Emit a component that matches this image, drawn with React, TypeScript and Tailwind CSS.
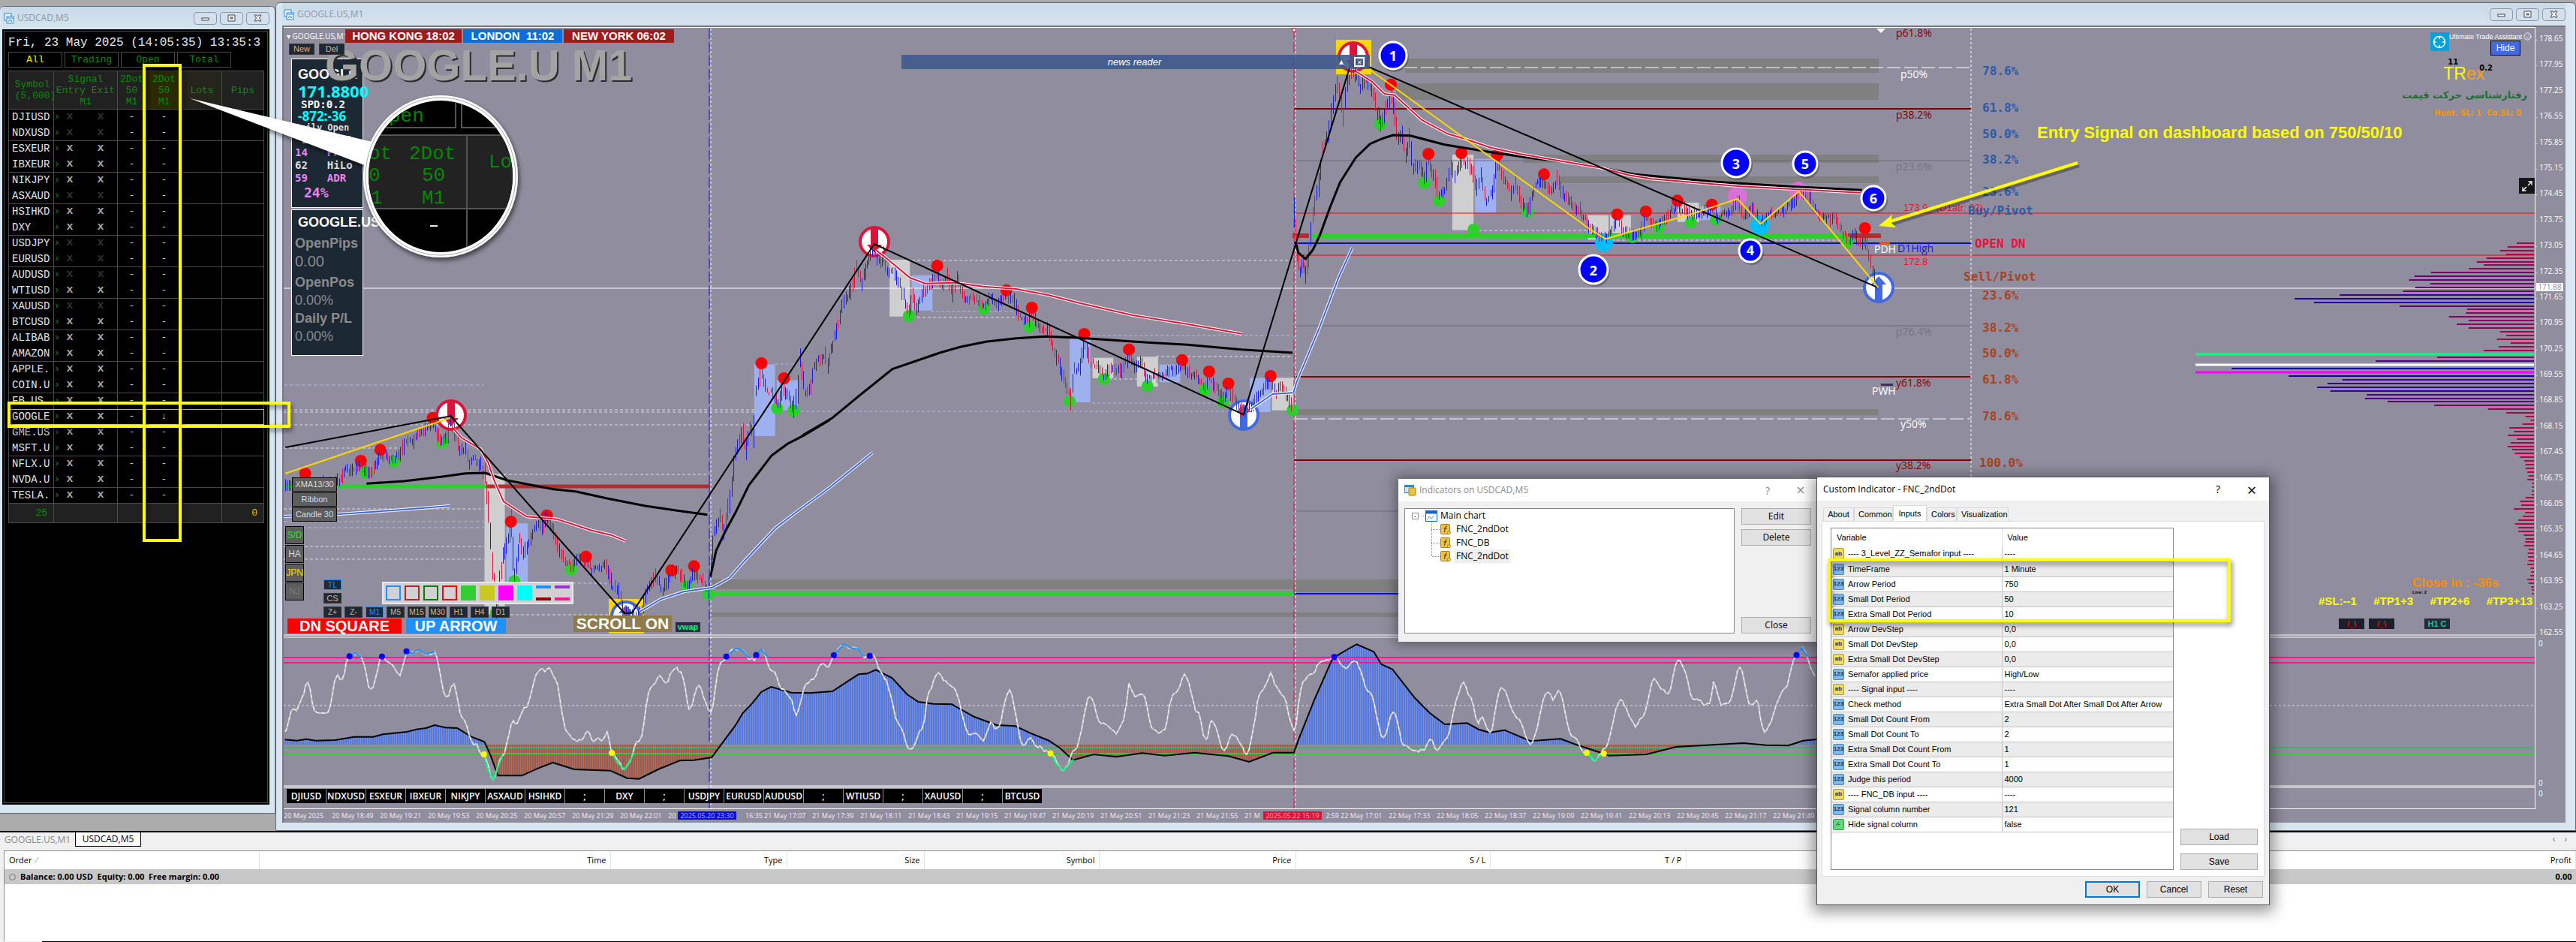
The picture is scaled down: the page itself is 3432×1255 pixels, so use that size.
import React from "react";
import { Maximize2, Crosshair, Smile } from "lucide-react";

type Pt = [number, number];

const parse = (s: string): Pt[] =>
  s.trim().split(/\s+/).map((p) => p.split(",").map(Number) as Pt);

/* Each stretch of the series is stored on its own sample grid: origin plus samples per unit. */
const grid = (ox: number, oy: number, sx: number) => (s: string): Pt[] =>
  parse(s).map(([x, y]) => [Math.round((ox + x / sx) * 10) / 10, Math.round((oy + y / 3) * 10) / 10]);

const gA = grid(370, 540, 1.96);
const gB = grid(1000, 240, 2.063);
const gC = grid(1680, 20, 2.613);
const gD = grid(2200, 20, 2.529);
const gE = grid(2800, 20, 2.481);
const gF = grid(2540, 420, 1.758);
const gG = grid(0, 840, 1.568);
const gH = grid(900, 840, 1.005);

const str = (p: Pt[]) => p.map((q) => q.join(",")).join(" ");

const makeRandom = (start: number) => {
  let seed = start;
  return () => {
    seed = (seed * 16807) % 2147483647;
    return seed / 2147483647;
  };
};

const price: Pt[][] = [
  [
    ...gA(
      "20,330 60,300 100,310 160,305 172,260 190,265 212,240 230,268 250,255 268,195 300,215 320,200 335,135 350,155 370,110 385,105 402,70 428,145 445,110 450,50 475,180 490,170 500,230 510,200 530,240 541,280 549,400 560,640 570,820 588,600 610,480 618,690 632,540 640,590 655,545 680,470 690,500 703,450 720,510 745,610 765,640 785,610 804,620 820,660 858,640 875,720 890,740 905,820 925,830 950,820 965,740 985,680 1005,740 1028,670 1045,665 1070,720 1087,670 1105,700 1125,730 1140,500 1155,440 1165,500 1180,380 1195,190 1215,110 1222,180 1232,90 1243,130"
    ),
    ...gB(
      "8,1000 15,850 30,770 45,850 60,850 75,900 90,830 105,870 118,910 130,830 136,720 150,850 165,820 175,750 190,710 205,700 212,740 235,600 250,510 262,470 275,450 290,350 306,410 320,330 338,265 352,330 365,300 375,360 395,370 410,420 435,530 445,470 455,510 475,450 500,400 512,370 525,430 540,390 555,450 567,390 590,480 610,470 640,500 660,470 680,490 703,455 725,480 740,550 765,560 772,530 795,590 815,590 830,660 850,740 865,820 878,870 890,760 905,740 918,650 935,730 950,740 970,780 1000,750 1015,770 1040,700 1055,750 1070,720 1090,800 1110,780 1130,790 1150,760 1185,745 1200,770 1225,780 1248,830 1260,780 1280,830 1298,880 1313,830 1330,880 1355,930 1375,900 1400,850 1429,800 1445,850 1460,820 1490,900"
    ),
  ],
  [
    ...gC(
      "115,800 125,950 135,1020 145,980 155,1030 165,960 180,800 200,680 215,540 235,470 250,350 265,270 285,400 300,280 320,210 345,290 365,260 385,290 405,390 415,430 440,360 455,310 465,400 478,500 490,470 505,560 515,500 530,620 550,590 568,660 583,590 605,660 620,730 645,680 660,600 675,640 698,580 725,600 750,690 765,640 785,740 805,700 822,590 850,660 870,710 885,670 905,740 930,780 955,680 985,660 1010,710 1030,660 1050,720 1085,760 1110,780 1145,850 1190,890 1215,880 1240,810 1260,860 1290,880 1325,860 1340,800 1365,830 1385,840"
    ),
    ...gD(
      "50,810 88,760 110,780 133,800 204,780 218,810 240,800 270,780 290,740 310,800 345,780 368,830 400,800 440,790 475,750 500,710 530,720 550,780 590,820 615,800 640,860 664,900 685,880 710,920 720,890 730,960 745,1020 755,1070 765,1090"
    ),
  ],
];

const bars = price.flatMap((line) => {
  const out: { x: number; y1: number; y2: number; up: boolean }[] = [];
  const rnd = makeRandom(7);
  for (let i = 0; i < line.length - 1; i++) {
    const [xa, ya] = line[i];
    const [xb, yb] = line[i + 1];
    const n = Math.max(1, Math.round((xb - xa) / 2.4));
    for (let k = 0; k < n; k++) {
      const y = ya + ((yb - ya) * k) / n + (rnd() - 0.5) * 7;
      const step = Math.abs(yb - ya) / n;
      const h = 2 + rnd() * 6 + Math.min(step, 30) * 0.5;
      out.push({
        x: Math.round(xa + ((xb - xa) * k) / n) + 0.5,
        y1: y - h,
        y2: y + h,
        up: rnd() < (yb < ya ? 0.78 : 0.3),
      });
    }
  }
  return out;
});

const redDots = [
  ...gA("72,273 217,222 268,178 405,50 609,465 703,440 805,605 1028,660 1087,643"),
  ...gB("30,732 92,792 513,342 703,440 773,510 917,615 1040,677 1186,719 1260,765 1313,813 1429,783"),
  ...gC("452,278 583,555 698,552 822,560 985,637 1240,797 1340,785 1450,742"),
  ...gD("204,758 720,852"),
];
const greenDots = [
  ...gA("230,270 303,225 429,150 618,703 766,657 1070,722 1125,755 570,830"),
  ...gB("73,912 118,921 435,543 641,515 766,586 877,884 971,795 1091,823 1248,840 1298,888 1490,920"),
  ...gC("415,437 568,672 620,742 740,858 928,787 1293,888 1385,848 1497,829"),
  ...gD("218,818 660,908"),
];

const greyZones = [
  gA("540,275 593,835"),
  gB("382,318 438,545"),
  gB("940,710 997,792"),
  gB("1062,706 1120,825"),
  gB("1433,790 1493,920"),
  gC("666,558 740,860"),
  gC("1138,800 1210,898"),
  gC("1215,800 1288,872"),
  gC("1450,750 1525,827"),
];
const blueZones = [
  gA("597,472 653,708"),
  gB("10,736 67,1023"),
  gB("443,380 500,521"),
  gB("72,800 130,920"),
  gB("877,625 934,888"),
  gB("1124,737 1181,808"),
  gB("1372,790 1429,927"),
  gC("745,575 818,790"),
  gC("1528,765 1600,820"),
];

const slow = [
  gA("232,313 330,303 430,285 490,272 541,270 600,300 650,315 720,335 780,345 860,372 960,402 1050,422 1122,437"),
  [
    ...gA("1130,685 1145,580 1170,500 1195,430 1230,320 1290,200 1330,155 1380,115 1440,60"),
    ...gB("145,1018 225,950 300,860 390,755 460,720 520,690 580,665 650,645 730,632 810,625 900,630 1050,645 1200,658 1350,677 1490,690"),
  ],
  [
    ...gC("120,905 130,950 155,975 180,940 205,880 240,770 275,670 330,570 380,515 420,495 460,480 520,482 640,518 800,548 950,573 1100,592 1300,637"),
    ...gD("0,643 200,665 460,685 710,700"),
  ],
];
const fast = [
  gA("460,95 480,130 530,175 550,230 565,300 590,385 650,445 730,455 820,500 870,518 908,542"),
  gB("345,280 380,320 438,390 480,413 560,410 640,425 730,435 820,460 900,490 1050,540 1200,575 1350,614"),
  [
    ...gC("330,225 385,265 430,315 465,320 560,420 650,475 710,495 800,530 900,555 1050,585 1180,610 1280,640"),
    ...gD("0,655 300,685 705,710"),
  ],
];
const base = [
  gA("0,445 160,435 300,420 450,402"),
  gA("945,825 1000,775 1060,745 1135,728 1180,690 1220,620 1300,490 1360,420 1440,330 1553,190"),
  gB("1375,915 1435,855 1492,850"),
  [...gB("1492,850 1500,810"), ...gC("200,1260 270,1050 318,930")],
];

const oscKnots = [
  ...gG(
    "595,410 612,310 620,320 630,270 643,205 657,320 670,335 685,325 705,180 715,200 727,105 742,90 755,110 775,240 798,105 815,125 835,180 850,85 862,90 875,75 890,95 908,85 932,270 948,215 965,350 990,450 1010,495 1030,595 1050,500 1072,365 1080,370 1095,310 1130,150 1138,162 1147,145 1160,200 1185,410 1205,440 1215,435 1228,405 1240,445 1250,430 1258,445 1268,400 1278,490 1305,555 1335,440 1360,230 1378,180 1390,210 1410,150 1422,165 1440,310 1460,220"
  ),
  ...gH(
    "47,330 60,130 80,72 90,80 97,110 105,118 115,75 130,160 145,240 152,260 162,340 175,210 185,190 195,130 205,145 212,100 225,55 235,70 245,75 252,108 262,95 280,190 300,380 315,480 330,400 340,240 352,170 362,205 370,220 395,420 402,405 412,440 422,370 430,395 447,240 465,460 475,430 485,465 502,490 520,560 535,480 555,260 570,370 590,410 600,360 607,215 615,260 625,250 640,400 650,410 655,390 665,260 673,240 681,170 700,330 710,440 718,360 735,480 745,410 765,490 785,240 797,175 805,230 815,270 828,400 840,200 850,180 865,120 883,105 898,155 905,130 912,130 930,250 948,430 961,320 975,460 992,485 1003,475 1010,430 1020,480 1030,440 1055,205 1065,270 1075,370 1080,345 1090,410 1105,225 1130,360 1145,455 1168,240 1175,280 1182,235 1200,420 1220,490 1231,520 1245,470 1265,275 1285,380 1295,340 1310,190 1320,235 1330,250 1342,115 1350,150 1362,270 1370,275 1378,300 1385,290 1390,200 1400,295 1410,290 1425,150 1440,300 1447,280 1458,405 1485,235 1500,100 1508,70 1528,190"
  ),
];
const osc: Pt[] = (() => {
  const rnd = makeRandom(11);
  const out: Pt[] = [];
  for (let i = 0; i < oscKnots.length - 1; i++) {
    const [xa, ya] = oscKnots[i];
    const [xb, yb] = oscKnots[i + 1];
    const n = Math.max(1, Math.round((xb - xa) / 3));
    for (let k = 0; k < n; k++) {
      const t = k / n;
      const s = t * t * (3 - 2 * t);
      out.push([Math.round(xa + (xb - xa) * t), Math.round(ya + (yb - ya) * s + (rnd() - 0.5) * 4)]);
    }
  }
  return out;
})();

const hist = [
  ...gG(
    "595,436 620,440 640,434 660,440 700,438 740,425 780,425 800,415 850,405 870,395 890,390 908,378 930,388 955,390 985,425 1012,445 1025,500 1040,580 1090,580 1125,550 1155,528 1200,555 1275,560 1310,590 1335,593 1375,555 1420,520 1450,518 1487,507"
  ),
  ...gH(
    "60,460 80,380 90,330 103,290 115,245 128,225 155,248 180,250 210,243 245,175 257,172 268,157 290,190 310,255 325,285 345,293 370,295 400,345 430,378 455,382 475,410 500,440 515,470 532,518 560,495 590,505 625,490 655,500 695,488 740,502 768,525 800,488 828,488 835,430 855,280 880,110 900,75 912,55 935,85 945,135 960,155 990,270 1010,330 1030,375 1060,370 1075,395 1090,408 1110,398 1145,442 1185,433 1205,455 1225,475 1250,500 1300,495 1340,465 1430,450 1460,458 1490,460 1510,440 1528,435"
  ),
];
const ZERO = 992;
const histArea = `378,${ZERO} ${str(hist)} 2420,${ZERO}`;

const profile = [
  ...gE(
    "1372,912 1342,927 1317,942 1337,957 1272,971 1240,986 1263,998 1214,1014 1089,1028 1034,1044 1016,1058 1086,1073 1036,1088 996,1103 787,1119 638,1134 702,1149 985,1163 1208,1175 1204,1191 1148,1206 1213,1220 1174,1236 1213,1251"
  ),
  ...gF(
    "1390,65 1405,80 1383,96 1415,111 1387,126 1352,141 1243,168 1099,183 762,212 895,242 1021,258 986,272 962,288 993,303 1078,318 1074,333 1127,345 1236,360 1362,375 1405,390 1450,405 1462,420 1443,435 1412,450 1423,465 1409,480 1430,495 1415,510 1408,525 1418,537 1425,552 1437,567 1447,582 1450,597 1450,612 1454,627 1457,642 1454,657 1465,672 1465,687 1465,702 1464,717 1450,729 1437,744 1440,759 1423,774 1449,789 1443,804 1433,819 1425,834 1433,849 1433,864 1446,879 1450,894 1449,906 1447,921 1457,936 1455,951 1456,966 1457,981 1454,996 1462,1011 1463,1026 1461,1041 1454,1056 1457,1071 1463,1086 1465,1099 1465,1113"
  ),
];
const heat = (x: number) => {
  const t = Math.min(1, (3376 - x) / 370);
  return `rgb(${Math.round(195 * (1 - t))},0,${Math.round(60 + 125 * t)})`;
};

function Sign({ x, y, up = false, box = false }: { x: number; y: number; up?: boolean; box?: boolean }) {
  const c = up ? "#4169e1" : "#dc143c";
  return (
    <g transform={`translate(${x} ${y})`}>
      {box && <rect x="-23" y="-23" width="47" height="46" fill="#ffd700" />}
      <circle r="19" fill="#fff" stroke={c} strokeWidth="4" />
      <path d="M-5,-17 H5 V4 H10 L0,15 L-10,4 H-5 Z" fill={c} transform={up ? "rotate(180)" : undefined} />
    </g>
  );
}

function Step({ x, y, r, n }: { x: number; y: number; r: number; n: number }) {
  return (
    <g>
      <circle cx={x + 2} cy={y + 3} r={r} fill="#000" opacity="0.25" />
      <circle cx={x} cy={y} r={r - 1} fill="#0000ff" stroke="#fff" strokeWidth="3" />
      <text x={x} y={y + r / 3 + 1} textAnchor="middle" fill="#fff" className="font-['Noto_Sans'] text-[18px] font-bold">
        {n}
      </text>
    </g>
  );
}

const MONO = "font-['DejaVu_Sans_Mono'] text-[16px] font-bold";
const LBL = "font-['Open_Sans'] text-[14px]";

function Chart() {
  const blue = "#2d5aa8";
  const rust = "#a8431f";
  const h = (y: number, x1: number, x2: number, color: string, w = 1, dash?: string) => (
    <line key={`${y}-${x1}-${color}`} x1={x1} x2={x2} y1={y} y2={y} stroke={color} strokeWidth={w} strokeDasharray={dash} />
  );
  return (
    <svg className="block h-[1040px] w-full" role="img" aria-label="GOOGLE.US one minute chart">
      <defs>
        <pattern id="sBlue" width="3" height="6" patternUnits="userSpaceOnUse">
          <rect width="3" height="6" fill="#4f78ea" />
          <rect width="1" height="6" fill="#8a8fb4" />
        </pattern>
        <pattern id="sRust" width="3" height="6" patternUnits="userSpaceOnUse">
          <rect width="3" height="6" fill="#a9593f" />
          <rect width="1" height="6" fill="#8f7a83" />
        </pattern>
        <clipPath id="above"><rect x="378" y="849" width="2100" height={ZERO - 849} /></clipPath>
        <clipPath id="below"><rect x="378" y={ZERO} width="2100" height="60" /></clipPath>
        <clipPath id="area"><polygon points={histArea} /></clipPath>
      </defs>
      <g transform="translate(-378 -37)">
        <rect x="1872" y="78" width="631" height="19" fill="#808080" />
        <rect x="1860" y="111" width="643" height="22" fill="#808080" />
        <rect x="2030" y="206" width="473" height="11" fill="#808080" />
        <rect x="2078" y="235" width="425" height="9" fill="#808080" />
        <rect x="1724" y="545" width="779" height="8" fill="#808080" />
        <rect x="947" y="772" width="1556" height="13" fill="#808080" />
        <rect x="947" y="816" width="1556" height="6" fill="#808080" />
        <rect x="1724" y="772" width="779" height="17" fill="#808080" />
        {[513, 695, 703].map((y) => h(y, 378, 645, "#a9b6ee", 1, "5 3"))}
        {[546, 549, 566].map((y) => h(y, 378, 1005, "#dcdce6", 1, "4 3"))}
        {[597].map((y) => h(y, 378, 530, "#dcdce6", 1, "4 3"))}
        {[678, 728, 745].map((y) => h(y, 378, 645, "#dcdce6", 1, "4 3"))}
        {h(632, 650, 945, "#dcdce6", 1, "4 3")}
        {h(777, 700, 810, "#c3caf0", 1, "4 3")}
        {h(819, 680, 850, "#dcdce6", 1, "4 3")}
        {h(347, 1215, 1722, "#dcdce6", 1, "4 3")}
        {h(415, 1240, 1350, "#a9b6ee", 1, "4 3")}
        {h(423, 1215, 1355, "#dcdce6", 1, "4 3")}
        {h(447, 1455, 1722, "#a9b6ee", 1, "4 3")}
        {h(475, 1540, 1722, "#dcdce6", 1, "4 3")}
        {h(485, 1033, 1060, "#a9b6ee", 1, "4 3")}
        {h(505, 1470, 1540, "#dcdce6", 1, "4 3")}
        {h(537, 1455, 1640, "#a9b6ee", 1, "4 3")}
        {h(548, 1060, 1640, "#a9b6ee", 1, "4 3")}
        {h(307, 1970, 2120, "#dcdce6", 1, "4 3")}
        {h(320, 2140, 2460, "#dcdce6", 1, "4 3")}

        {greyZones.map(([a, b], i) => (
          <rect key={i} x={a[0]} y={a[1]} width={b[0] - a[0]} height={b[1] - a[1]} fill="#d0cfd0" />
        ))}
        {blueZones.map(([a, b], i) => (
          <rect key={i} x={a[0]} y={a[1]} width={b[0] - a[0]} height={b[1] - a[1]} fill="#9fb0ee" />
        ))}

        {h(145, 1724, 2626, "#800000", 2)}
        {h(214, 1724, 2626, "#6b6879")}
        {h(434, 1724, 2626, "#6b6879")}
        {h(681, 1724, 2626, "#6b6879")}
        {h(502, 1724, 2626, "#8b0000", 2)}
        {h(613, 1724, 2626, "#8b0000", 2)}
        {h(90, 1870, 2626, "#fff", 1, "18 5")}
        {h(558, 1724, 2626, "#fff", 1, "18 5")}
        {h(384, 378, 3377, "#fff", 1)}
        {h(284, 1724, 3377, "#ff0000", 1)}
        {h(340, 1724, 3377, "#ff0000", 1)}
        {h(324, 1724, 2626, "#0000ff", 2)}
        {h(791, 1724, 2626, "#0000ff", 2)}
        {h(648, 378, 648, "#28d228", 5)}
        {h(648, 648, 946, "#b03030", 5)}
        {h(791, 947, 1724, "#28d228", 5)}
        {h(314, 1745, 2462, "#28d228", 6)}
        {h(314, 1722, 1744, "#b03030", 6)}
        {h(314, 2462, 2506, "#b03030", 6)}
        {h(324, 2504, 2518, "#ff4500", 3)}
        <line x1="945" x2="945" y1="38" y2="1077" stroke="#1414d2" strokeDasharray="14 4" />
        <line x1="947" x2="947" y1="38" y2="1077" stroke="#fff" strokeDasharray="3 3" />
        <line x1="1724" x2="1724" y1="38" y2="1077" stroke="#dc143c" strokeDasharray="14 4" />
        <line x1="1726" x2="1726" y1="38" y2="1077" stroke="#fff" strokeDasharray="3 3" />
        <rect x="1722" y="38" width="4" height="4" fill="#fff" stroke="#dc143c" />
        <line x1="2626" x2="2626" y1="38" y2="846" stroke="#fff" strokeDasharray="3 3" />

        {greenDots.map(([x, y], i) => <circle key={i} cx={x} cy={y} r="8" fill="#28d228" />)}
        {redDots.map(([x, y], i) => <circle key={i} cx={x} cy={y} r="8" fill="#ff0000" />)}
        <circle cx="2137" cy="323" r="12" fill="#00bfff" />
        <circle cx="2345" cy="300" r="13" fill="#00bfff" />
        <circle cx="2315" cy="262" r="13" fill="#da70d6" />
        <circle cx="2396" cy="254" r="12" fill="#da70d6" />

        <Sign x={601} y={553} />
        <Sign x={1165} y={322} />
        <Sign x={1803} y={76} box />
        <Sign x={834} y={821} up box />
        <Sign x={1657} y={553} up />
        <Sign x={2503} y={383} up />

        {bars.map((b, i) => (
          <line key={i} x1={b.x} x2={b.x} y1={b.y1} y2={b.y2} stroke={b.up ? "#1a1ae6" : "#dc143c"} />
        ))}
        {slow.map((p, i) => <polyline key={i} points={str(p)} fill="none" stroke="#000" strokeWidth="3" strokeLinejoin="round" />)}
        {fast.map((p, i) => (
          <g key={i} fill="none">
            <polyline points={str(p)} stroke="#fff" strokeWidth="4" />
            <polyline points={str(p)} stroke="#dc143c" strokeWidth="2" />
          </g>
        ))}
        {base.map((p, i) => (
          <g key={i} fill="none">
            <polyline points={str(p)} stroke="#fff" strokeWidth="4" />
            <polyline points={str(p)} stroke="#3f63dc" strokeWidth="2" />
          </g>
        ))}
        <g fill="none" strokeWidth="2">
          <polyline points={str([...gA("20,168 452,43 905,830 925,830"), ...gB("340,255 1355,937"), ...gC("310,205 340,190"), ...gD("765,1090")])} stroke="#000" />
          <polyline points={str(gA("20,272 450,50"))} stroke="#ffd700" />
          <polyline points={str([...gC("375,215 1150,860 1200,895 1500,795"), ...gD("290,735 368,835 497,705 765,1090")])} stroke="#ffd700" />
        </g>

        {profile.map(([x, y], i) => h(Math.round(y), x, 3376, heat(x), 2))}
        {h(472, 2925, 3376, "#00ff7f", 3)}
        {h(486, 2925, 3376, "#fff", 3)}
        {h(496, 2925, 3376, "#ff00ff", 3)}

        <g className={LBL}>
          <text x="2526" y="49" fill="#800000">p61.8%</text>
          <text x="2532" y="104" fill="#fff">p50%</text>
          <text x="2526" y="158" fill="#800000">p38.2%</text>
          <text x="2526" y="227" fill="#77747f">p23.6%</text>
          <text x="2526" y="447" fill="#77747f">p76.4%</text>
          <text x="2526" y="515" fill="#8b0000">y61.8%</text>
          <text x="2532" y="570" fill="#fff">y50%</text>
          <text x="2526" y="625" fill="#8b0000">y38.2%</text>
          <text x="2497" y="337" fill="#fff">PDH</text>
          <text x="2494" y="526" fill="#fff">PWH</text>
          <text x="2528" y="336" fill="#1414e6">D1High</text>
        </g>
        <rect x="2506" y="511" width="16" height="3" fill="#3b2f5c" />
        <g className="font-['Liberation_Sans'] text-[13px]" fill="#f01028">
          <text x="2536" y="281">173.9</text>
          <text x="2580" y="281">(D1atr: 62)</text>
          <text x="2536" y="353">172.8</text>
        </g>
        <g className={MONO}>
          {([[100, "78.6%"], [149, "61.8%"], [184, "50.0%"], [218, "38.2%"], [261, "23.6%"]] as [number, string][]).map(([y, t]) => (
            <text key={y} x="2641" y={y} fill={blue}>{t}</text>
          ))}
          <text x="2622" y="286" fill={blue}>Buy/Pivot</text>
          <text x="2631" y="330" fill="#e8103c">OPEN DN</text>
          <text x="2616" y="374" fill={rust}>Sell/Pivot</text>
          {([[399, "23.6%"], [442, "38.2%"], [476, "50.0%"], [511, "61.8%"], [560, "78.6%"]] as [number, string][]).map(([y, t]) => (
            <text key={y} x="2641" y={y} fill={rust}>{t}</text>
          ))}
          <text x="2637" y="622" fill={rust}>100.0%</text>
        </g>
        <path d="M2500,38 h12 l-6,6 Z" fill="#fff" />

        <text x="2714" y="184" fill="#ffff00" className="font-['Liberation_Sans'] text-[22px] font-bold">
          Entry Signal on dashboard based on 750/50/10
        </text>
        <g opacity="0.3" transform="translate(2 4)">
          <path d="M2768,217 L2515,296" stroke="#000" strokeWidth="4" />
        </g>
        <path d="M2768,217 L2515,296" stroke="#ffff00" strokeWidth="4" />
        <path d="M2503,301 L2521,286 L2519,296 L2526,303 Z" fill="#ffff00" />
        <Step x={1856} y={74} r={19} n={1} />
        <Step x={2123} y={359} r={20} n={2} />
        <Step x={2313} y={217} r={20} n={3} />
        <Step x={2332} y={334} r={16} n={4} />
        <Step x={2405} y={218} r={17} n={5} />
        <Step x={2496} y={264} r={17} n={6} />

        {h(846, 378, 3377, "#fff")}
        {h(849, 378, 3377, "#fff")}
        {h(1047, 378, 3377, "#fff")}
        {h(1049, 378, 3377, "#fff")}
        {h(940, 378, 3377, "#dcdce6", 1, "3 3")}
        <g clipPath="url(#area)">
          <rect x="378" y="849" width="2050" height="150" clipPath="url(#above)" fill="url(#sBlue)" />
          <rect x="378" y={ZERO} width="2050" height="60" clipPath="url(#below)" fill="url(#sRust)" />
        </g>
        {h(876, 378, 3377, "#ff1493", 2)}
        {h(883, 378, 3377, "#ff1493", 2)}
        {h(996, 378, 3377, "#3cb371", 2)}
        {h(1004, 378, 3377, "#32cd32", 2)}
        <polyline points={str(hist)} fill="none" stroke="#000" strokeWidth="2" />
        <polyline points={str(osc)} fill="none" stroke="#c4c4c8" strokeWidth="2" />
        <polyline points={str(osc)} fill="none" stroke="#fff" strokeWidth="1" strokeDasharray="5 3" />
        <g fill="none" stroke="#1e90ff" strokeWidth="2">
          <polyline points={str(gG("727,105 742,90 755,108"))} />
          <polyline points={str(gG("848,90 862,90 875,75 890,95 908,85"))} />
          <polyline points={str(gH("68,105 80,72 90,80 97,108"))} />
          <polyline points={str(gH("108,100 115,75 124,108"))} />
          <polyline points={str(gH("212,100 225,55 235,70 245,75 252,105"))} />
          <polyline points={str(gH("1500,100 1508,70 1516,106"))} />
        </g>
        <g fill="none" stroke="#00fa7a" strokeWidth="2">
          <polyline points={str(gG("1010,495 1020,560 1030,595 1050,500"))} />
          <polyline points={str(gG("1278,490 1290,530 1305,555 1325,490"))} />
          <polyline points={str(gH("502,490 510,535 520,560 533,515"))} />
          <polyline points={str(gH("1220,490 1231,520 1243,490"))} />
        </g>
        {[...gG("730,103 798,104 849,83"), ...gH("68,104 108,98 212,99 260,101 882,106 1501,98")].map(([x, y], i) => (
          <circle key={i} cx={x} cy={y} r="4" fill="#0000ff" />
        ))}
        {[...gG("1011,495 1278,489"), ...gH("502,491 1220,489 1243,492")].map(([x, y], i) => (
          <circle key={i} cx={x} cy={y} r="4" fill="#ffff00" />
        ))}
      </g>
    </svg>
  );
}

const symbols = "DJIUSD NDXUSD ESXEUR IBXEUR NIKJPY ASXAUD HSIHKD DXY USDJPY EURUSD AUDUSD WTIUSD XAUUSD BTCUSD ALIBAB AMAZON APPLE. COIN.U FB.US GOOGLE GME.US MSFT.U NFLX.U NVDA.U TESLA.".split(" ");
const dimmed = new Set(["DJIUSD", "NDXUSD", "ASXAUD", "USDJPY", "EURUSD", "AUDUSD", "XAUUSD"]);

function WindowButtons() {
  return (
    <div className="flex gap-1">
      {["Minimize", "Restore", "Close"].map((n) => (
        <button key={n} aria-label={n} className="flex h-[17px] w-[31px] items-center justify-center rounded-sm border border-[#8a97ab] bg-[#d3e0ec]">
          <svg width="11" height="10" viewBox="0 0 11 10" fill="#fff" stroke="#3f4452">
            {n === "Minimize" && <rect x="1" y="5" width="9" height="3" />}
            {n === "Restore" && <path d="M1,1 H10 V9 H1 Z M4,4 H7 V6 H4 Z" fillRule="evenodd" />}
            {n === "Close" && <path d="M1,1 H4 L5.5,3 L7,1 H10 L7.5,5 L10,9 H7 L5.5,7 L4,9 H1 L3.5,5 Z" />}
          </svg>
        </button>
      ))}
    </div>
  );
}

function TitleBar({ title }: { title: string }) {
  return (
    <header className="flex h-[30px] items-center gap-1 bg-gradient-to-b from-[#c9dae8] to-[#d6e3ef] pr-0 pl-[2px]">
      <svg width="14" height="15" viewBox="0 0 14 15" fill="#eaf6ff" stroke="#2e8fd0">
        <rect x="1" y="1" width="9" height="9" />
        <rect x="4" y="5" width="9" height="9" />
        <path d="M4,7 H13 M6,12 L8,9 L10,12 L11,10" />
      </svg>
      <h2 className="flex-1 font-['Open_Sans'] text-[12px] text-[#8b98a6]">{title}</h2>
      <WindowButtons />
    </header>
  );
}

function Dashboard() {
  const cell = "border border-[#4a4a4a] p-0";
  const head = "border border-[#4a4a4a] p-0 text-[13px] leading-[15px] font-normal text-[#0a8a0a]";
  return (
    <section className="mt-2 w-[367px] shrink-0 rounded-t-md border-t border-r border-b border-[#5d6b78] bg-[#d9e6f2] pr-[7px] pb-[11px] pl-[3px]">
      <TitleBar title="USDCAD,M5" />
      <div className="h-[1033px] bg-black p-[2px]">
        <div className="h-full overflow-hidden border border-[#0a6b2a] px-[5px] pt-[3px] font-['Liberation_Mono']">
          <p className="h-[24px] whitespace-nowrap text-[16px] leading-[24px] text-[#e6e6e6]">Fri, 23 May 2025 (14:05:35) 13:35:3</p>
          <div className="flex gap-[3px] text-[13px] text-[#0a8a0a]">
            {["All", "Trading", "Open", "Total"].map((t) => (
              <button key={t} className={`h-[21px] w-[72px] border border-[#4a4a4a] ${t === "All" ? "text-[#e6e600]" : ""}`}>{t}</button>
            ))}
          </div>
          <table className="mt-1 w-[340px] table-fixed border-collapse text-[13px]">
            <colgroup>
              <col className="w-[60px]" />
              <col className="w-[85px]" />
              <col className="w-[38px]" />
              <col className="w-[48px]" />
              <col className="w-[53px]" />
              <col className="w-[56px]" />
            </colgroup>
            <thead>
              <tr className="h-[51px]">
                <th className={`${head} bg-[#212121] text-left`}>&nbsp;Symbol<br />&nbsp;(5,000)</th>
                <th className={`${head} bg-[#212121]`}>Signal<br />Entry Exit<br />M1</th>
                <th className={`${head} bg-[#212121]`}>2Dot<br />50<br />M1</th>
                <th className={`${head} bg-[#2b2900]`}>2Dot<br />50<br />M1</th>
                <th className={`${head} bg-[#26251c]`}>Lots</th>
                <th className={`${head} bg-[#212121]`}>Pips</th>
              </tr>
            </thead>
            <tbody>
              {symbols.map((s, i) => {
                const edge = i % 2 ? "border-b border-b-[#4a4a4a]" : "";
                const c = `border-x border-x-[#4a4a4a] p-0 ${edge}`;
                return (
                  <tr key={s} className={`h-[21px] leading-[18px] ${s === "GOOGLE" ? "outline outline-1 outline-[#c8c8c8] -outline-offset-1" : ""}`}>
                    <td className={`${c} pl-1 text-[14px] text-[#e2e2e2]`}>{s}</td>
                    <td className={c}>
                      <div className={`flex ${dimmed.has(s) ? "text-[#333]" : "text-[#a8a8a8]"}`}>
                        <span className="w-[10px] text-[#0a8a0a]">›</span>
                        <span className="w-[22px] text-center text-[15px] font-bold">x</span>
                        <span className="ml-[20px] w-[20px] text-center text-[15px] font-bold">x</span>
                      </div>
                    </td>
                    <td className={`${c} text-center text-[#d0d0d0]`}>-</td>
                    <td className={`${c} text-center text-[#d0d0d0]`}>{s === "GOOGLE" ? "↓" : "-"}</td>
                    <td className={c} />
                    <td className={c} />
                  </tr>
                );
              })}
            </tbody>
            <tfoot>
              <tr className="h-[26px] bg-[#212121]">
                <td className={`${cell} pr-2 text-right text-[#0a8a0a]`}>25</td>
                <td className={cell} /><td className={cell} /><td className={cell} /><td className={cell} />
                <td className={`${cell} pr-2 text-right text-[#e6b800]`}>0</td>
              </tr>
            </tfoot>
          </table>
        </div>
      </div>
    </section>
  );
}

function InfoPanels() {
  const box = "w-[96px] border border-white bg-[#1d2835] pl-1 whitespace-nowrap";
  return (
    <div className="absolute top-[41px] left-[10px] flex flex-col gap-[2px]">
      <div className={`${box} h-[199px] pt-2 font-['DejaVu_Sans_Mono'] text-[14px] leading-[17px] font-bold text-[#dcdcdc]`}>
        <p className="pl-1 font-['Liberation_Sans'] text-[18px] leading-[24px] text-white">GOOGLE</p>
        <p className="pl-1 font-['Noto_Sans'] text-[22px] leading-[20px] text-[#00ffff]">171.8800</p>
        <p className="pl-2 leading-[16px] text-white">SPD:0.2</p>
        <p className="pl-1 font-['Noto_Sans'] text-[17px] leading-[16px] text-[#00ffff]">-872:-36</p>
        <p className="text-[12px] leading-[14px]">Daily Open</p>
        <p className="text-[14px] leading-[18px]">&nbsp;171.9200</p>
        <p className="flex gap-[26px] text-[#ee82ee]"><span>14</span><span>PP</span></p>
        <p className="flex gap-[26px]"><span>62</span><span>HiLo</span></p>
        <p className="flex gap-[26px] text-[#ee82ee]"><span>59</span><span>ADR</span></p>
        <p className="pl-3 text-[18px] leading-[22px] text-[#ee82ee]">24%</p>
      </div>
      <div className={`${box} h-[195px] pt-1 font-['Liberation_Sans'] text-[18px] leading-[24px] text-[#8a8a8a]`}>
        <p className="pl-1 text-[18px] font-bold text-white">GOOGLE.US</p>
        <p className="mt-1 font-bold">OpenPips</p>
        <p className="text-[20px]">0.00</p>
        <p className="mt-1 font-bold">OpenPos</p>
        <p>0.00%</p>
        <p className="font-bold">Daily P/L</p>
        <p>0.00%</p>
      </div>
    </div>
  );
}

function ChartOverlays() {
  const dark = "border border-[#3a3a3a] bg-[#1f2936] text-[#d8b48a]";
  const grey = "border border-black bg-[#5d5d5d] text-[#dcdcdc]";
  return (
    <>
      <InfoPanels />
      <p className="absolute top-[20px] left-[55px] font-['Liberation_Sans'] text-[58px] leading-[60px] font-bold whitespace-nowrap text-[#a3a3a3] drop-shadow-[2px_2px_0px_#2b2b2b]">GOOGLE.U M1</p>
      <div className="absolute top-[2px] left-[4px] flex items-center font-['Liberation_Sans'] text-white">
        <span className="w-[78px] font-['Open_Sans'] text-[10px] leading-[16px] whitespace-nowrap">▾ GOOGLE.US,M1</span>
        <div className="flex gap-[2px] text-[15px] leading-[18px] font-bold whitespace-nowrap">
          <span className="w-[155px] bg-[#a01c1c] text-center">HONG KONG 18:02</span>
          <span className="w-[132px] bg-[#0a6fd8] text-center">LONDON&nbsp; 11:02</span>
          <span className="w-[147px] bg-[#a01c1c] text-center">NEW YORK 06:02</span>
        </div>
      </div>
      <div className="absolute top-[21px] left-[7px] flex gap-[6px] font-['Liberation_Sans'] text-[11px] leading-none">
        <button className={`${dark} h-[15px] w-[34px]`}>New</button>
        <button className={`${dark} h-[15px] w-[34px]`}>Del</button>
      </div>

      <div className="absolute top-[36px] left-[823px] flex h-[19px] w-[624px] items-center bg-[#3e5a8e]/90 text-white">
        <span className="flex-1 pl-[40px] text-center font-['Liberation_Sans'] text-[13px] italic">news reader</span>
        <button aria-label="Collapse news" className="text-[10px]">▲</button>
        <button aria-label="Close news" className="mr-[7px] ml-3 flex h-[13px] w-[14px] items-center justify-center border-2 border-white text-[10px] leading-none">×</button>
      </div>

      <div className="absolute top-[599px] left-[11px] flex flex-col gap-px font-['Liberation_Sans'] text-[11px]">
        {["XMA13/30", "Ribbon", "Candle 30"].map((t) => (
          <button key={t} className={`${grey} h-[19px] w-[60px] leading-none`}>{t}</button>
        ))}
      </div>
      <div className="absolute top-[664px] left-[2px] flex flex-col gap-px font-['Liberation_Sans'] text-[12px]">
        <button className={`${grey} h-[24px] w-[25px]`}><span className="text-[#28e628]">S/D</span></button>
        <button className={`${grey} h-[24px] w-[25px]`}>HA</button>
        <button className={`${grey} h-[24px] w-[25px]`}><span className="text-[#ffd700]">JPN</span></button>
        <button className={`${grey} h-[24px] w-[25px]`}><span className="text-[#7b7b7b]">NJ</span></button>
      </div>
      <div className="absolute top-[735px] left-[53px] flex flex-col gap-[4px] font-['Liberation_Sans'] text-[11px] leading-none">
        <button className="h-[14px] w-[24px] border border-[#1e90ff] bg-[#1f2936] text-[#1e90ff]">TL</button>
        <button className={`${dark} h-[14px] w-[24px]`}>CS</button>
        <div className="flex gap-[4px] text-[10px]">
          {["Z+", "Z-", "M1", "M5", "M15", "M30", "H1", "H4", "D1"].map((t) => (
            <button key={t} className={`${t === "M1" ? "border border-[#1e90ff] bg-[#1f2936] text-[#1e90ff]" : dark} h-[15px] w-[24px] p-0`}>{t}</button>
          ))}
        </div>
      </div>
      <div className="absolute top-[738px] left-[131px] flex h-[30px] w-[255px] items-center gap-[5px] border-2 border-[#e8e8e8] bg-[#d3d0d3] px-[3px]">
        <i className="h-5 w-5 border-2 border-[#1e90ff]" />
        <i className="h-5 w-5 border-2 border-[#a52a2a]" />
        <i className="h-5 w-5 border-2 border-[#008000]" />
        <i className="h-5 w-5 border-2 border-[#ff0000]" />
        <i className="h-5 w-5 bg-[#32cd32]" />
        <i className="h-5 w-5 bg-[#c8c820]" />
        <i className="h-5 w-5 bg-[#ff00ff]" />
        <i className="h-5 w-5 bg-[#00ffff]" />
        <i className="h-5 w-5 border-t-4 border-b-4 border-t-[#1e90ff] border-b-[#8b0000]" />
        <i className="h-5 w-5 border-t-4 border-b-4 border-t-[#9932cc] border-b-[#ff1493]" />
      </div>
      <div className="absolute top-[787px] left-[5px] flex gap-[6px] font-['Liberation_Sans'] text-[20px] leading-[20px] font-bold text-white">
        <span className="w-[152px] bg-[#ff0000] text-center">DN SQUARE</span>
        <span className="w-[133px] bg-[#1e90ff] text-center">UP ARROW</span>
      </div>
      <div className="absolute top-[783px] left-[386px] flex items-end gap-[5px] font-['Liberation_Sans'] font-bold whitespace-nowrap">
        <span className="w-[131px] bg-[#8f7b4b] text-center text-[21px] leading-[22px] text-white">SCROLL ON</span>
        <span className="w-[33px] bg-[#2b2b48] text-center text-[11px] leading-[13px] text-[#00fa7a]">vwap</span>
      </div>

      <div className="absolute top-[1014px] left-[4px] flex gap-px font-['Open_Sans'] text-[12px] font-semibold text-white">
        {"DJIUSD NDXUSD ESXEUR IBXEUR NIKJPY ASXAUD HSIHKD ; DXY ; USDJPY EURUSD AUDUSD ; WTIUSD ; XAUUSD ; BTCUSD".split(" ").map((t, i) => (
          <button key={i} className="h-[19px] w-[52px] bg-black p-0 text-center leading-[19px]">{t}</button>
        ))}
      </div>

      <div className="absolute top-[6px] right-[4px] flex flex-col items-end font-['Liberation_Sans'] text-white">
        <div className="flex items-start">
          <span className="flex h-[25px] w-[25px] items-center justify-center bg-[#06a2da]"><Crosshair size={18} /></span>
          <div className="flex flex-col items-end">
            <span className="flex items-center gap-[2px] text-[9px] leading-[10px] whitespace-nowrap">Ultimate Trade Assistant <Smile size={11} /></span>
            <button className="mr-[15px] h-[20px] w-[40px] border border-black bg-[#4169e1] text-[12px] leading-none">Hide</button>
          </div>
        </div>
        <p className="mt-3 mr-[52px] flex items-start text-[23px] leading-[24px]">
          <span className="relative text-[#ffff00]">
            <b className="absolute -top-[10px] left-[6px] font-['DejaVu_Sans'] text-[10px] leading-[14px] text-black">11</b>TR
          </span>
          <span className="mr-[-7px] text-[#ffa500]">ex</span>
          <b className="font-['DejaVu_Sans'] text-[10px] leading-[10px] text-black">0.2</b>
        </p>
        <p dir="rtl" className="mt-1 mr-[6px] font-['DejaVu_Sans'] text-[13px] leading-[26px] font-bold whitespace-nowrap text-[#1e6e32]">رفتارشناسی حرکت قیمت</p>
        <p className="mt-1 mr-[14px] font-['DejaVu_Sans'] text-[10px] leading-[14px] font-bold whitespace-nowrap text-[#ff9500]">Hunt. SL: 1 &nbsp;Co.SL: 0</p>
      </div>
      <button aria-label="Expand" className="absolute top-[200px] right-0 flex h-[21px] w-[21px] items-center justify-center bg-[#151515] text-white"><Maximize2 size={16} /></button>

      <div className="absolute top-[731px] right-[3px] flex w-[285px] flex-col font-['Liberation_Sans'] font-bold whitespace-nowrap">
        <p className="ml-[125px] text-[17px] leading-[18px] text-[#ff8c00]">Close in : -36s</p>
        <p className="ml-[125px] text-[6px] leading-[6px] text-black">Live: 2</p>
        <p className="flex justify-between text-[15px] leading-[18px] text-[#ffff00]"><span>#SL:--1</span><span>#TP1+3</span><span>#TP2+6</span><span>#TP3+13</span></p>
        <div className="mt-[14px] ml-[27px] flex gap-[6px] text-center text-[11px] leading-[14px]">
          <span className="w-[34px] bg-[#1b1f2c] text-[#e01010]">/_\</span>
          <span className="w-[34px] bg-[#1b1f2c] text-[#e01010]">/_\</span>
          <span className="ml-[34px] w-[34px] bg-[#232b38] text-[#12c89a]">H1 C</span>
        </div>
      </div>
    </>
  );
}

const dates = "20 May 2025|20 May 18:49|20 May 19:21|20 May 19:53|20 May 20:25|20 May 20:57|20 May 21:29|20 May 22:01|20|16:35|21 May 17:07|21 May 17:39|21 May 18:11|21 May 18:43|21 May 19:15|21 May 19:47|21 May 20:19|21 May 20:51|21 May 21:23|21 May 21:55|21 M|2:59|22 May 17:01|22 May 17:33|22 May 18:05|22 May 18:37|22 May 19:09|22 May 19:41|22 May 20:13|22 May 20:45|22 May 21:17|22 May 21:49".split("|");

function ChartWindow() {
  const ticks = Array.from({ length: 24 }, (_, i) => (178.65 - i * 0.7).toFixed(2));
  return (
    <section className="mt-[3px] flex min-w-0 flex-1 flex-col rounded-t-md border border-[#5d6b78] bg-[#d9e6f2] pr-[13px] pb-[10px] pl-[8px]">
      <TitleBar title="GOOGLE.US,M1" />
      <div className="flex border-t-2 border-l-2 border-[#77757f] bg-[#908d9e]">
        <div className="min-w-0 flex-1">
          <div className="relative overflow-hidden border-t border-r border-b border-white">
            <Chart />
            <ChartOverlays />
          </div>
          <ol className="relative flex h-[18px] overflow-hidden font-['Open_Sans'] text-[9px] leading-[18px] text-[#eeeef4]">
            {dates.map((d) => (
              <li key={d} className={`w-[64px] shrink-0 whitespace-nowrap ${d.length === 5 || d === "2:59" ? "pr-[2px] text-right" : ""}`}>{d}</li>
            ))}
            <li className="absolute top-[3px] left-[525px] w-[78px] bg-[#0a0ae0] text-center text-[9px] leading-[11px] text-[#aab4f0]">2025.05.20 23:30</li>
            <li className="absolute top-[3px] left-[1305px] w-[78px] bg-[#dc143c] text-center text-[9px] leading-[11px] text-[#f0a0b0]">2025.05.22 15:19</li>
          </ol>
        </div>
        <div className="relative w-[40px] font-['Open_Sans'] text-[10px] text-white">
          <ul className="flex h-[814px] flex-col justify-between pt-2">
            {ticks.map((t) => <li key={t} className="leading-[14px]"><span className="text-[8px]">-</span> {t}</li>)}
          </ul>
          <p className="pl-1 leading-[14px]">0</p>
          <p className="mt-[172px] pl-1 leading-[14px]">0</p>
          <p className="pl-1 leading-[14px]">0</p>
          <span className="absolute top-[341px] left-px w-[36px] bg-white text-center leading-[11px] text-[#908d9e]">171.88</span>
        </div>
      </div>
    </section>
  );
}

const winBtn = "h-[22px] border border-[#adadad] bg-[#e1e1e1] text-[12px] leading-none";

function FxIcon() {
  return (
    <svg width="15" height="15" viewBox="0 0 15 15">
      <rect x="0.5" y="0.5" width="12" height="13" rx="1" fill="#ecc440" stroke="#a97f10" />
      <path d="M9,3 Q7,2.5 6.5,5 L5.5,11 M4.5,6 H8.5" stroke="#3d2f05" fill="none" />
      <circle cx="11.5" cy="11.5" r="2" fill="#ffd860" stroke="#a97f10" />
    </svg>
  );
}

function IndicatorsDialog() {
  return (
    <div role="dialog" aria-label="Indicators on USDCAD,M5" className="absolute top-[638px] left-[1863px] flex h-[217px] w-[558px] flex-col bg-[#f0f0f0] font-['Open_Sans'] text-[12px] text-black shadow-[0_0_16px_4px_rgba(0,0,0,0.35)]">
      <header className="flex h-[30px] items-center bg-white pl-2 text-[#8c8c8c]">
        <svg width="16" height="15" viewBox="0 0 16 15">
          <rect x="0.5" y="0.5" width="12" height="10" fill="#cfe6fa" stroke="#2e86c8" />
          <path d="M1,2 H12" stroke="#2e86c8" strokeWidth="2" />
          <rect x="6" y="4" width="9" height="10" rx="1" fill="#ecc440" stroke="#a97f10" />
        </svg>
        <h2 className="ml-1 flex-1">Indicators on USDCAD,M5</h2>
        <button className="w-11 text-[14px]">?</button>
        <button aria-label="Close" className="w-11 text-[20px] leading-none">×</button>
      </header>
      <div className="flex flex-1 gap-[9px] px-[8px] pt-[9px] pb-[11px]">
        <ul className="flex-1 border border-[#828790] bg-white pl-[9px] leading-[18px]">
          <li className="flex items-center gap-[4px]">
            <span className="flex h-[9px] w-[9px] items-center justify-center border border-[#919191] text-[9px] leading-none">-</span>
            <svg width="21" height="15" viewBox="0 0 21 15"><path d="M0,7.500 H5" stroke="#888" strokeDasharray="1 1" /><rect x="5.500" y="0.500" width="15" height="14" fill="#fff" stroke="#1e62c8" /><path d="M6,2.500 H20" stroke="#1e62c8" strokeWidth="4" /><path d="M8,12 L10,8 L13,11 L16,7" fill="none" stroke="#5a9be6" /></svg>
            Main chart
          </li>
          {["FNC_2ndDot", "FNC_DB", "FNC_2ndDot"].map((t, i) => (
            <li key={i} className="flex items-center pl-[26px]">
              <svg width="12" height="18"><path d={i === 2 ? "M0.500,0 V9.500 H12" : "M0.500,0 V18 M0,9.500 H12"} fill="none" stroke="#888" strokeDasharray="1 1" /></svg>
              <FxIcon />
              <span className={`ml-1 px-[2px] ${i === 2 ? "bg-[#efefef]" : ""}`}>{t}</span>
            </li>
          ))}
        </ul>
        <div className="flex w-[93px] flex-col gap-[6px]">
          <button className={winBtn}>Edit</button>
          <button className={winBtn}>Delete</button>
          <button className={`${winBtn} mt-auto`}>Close</button>
        </div>
      </div>
    </div>
  );
}

const inputs: [string, string, string][] = [
  ["ab", "---- 3_Level_ZZ_Semafor input ----", "----"],
  ["123", "TimeFrame", "1 Minute"],
  ["123", "Arrow Period", "750"],
  ["123", "Small Dot Period", "50"],
  ["123", "Extra Small Dot Period", "10"],
  ["ab", "Arrow DevStep", "0,0"],
  ["ab", "Small Dot DevStep", "0,0"],
  ["ab", "Extra Small Dot DevStep", "0,0"],
  ["123", "Semafor applied price", "High/Low"],
  ["ab", "---- Signal input ----", "----"],
  ["123", "Check method", "Extra Small Dot After Small Dot After Arrow"],
  ["123", "Small Dot Count From", "2"],
  ["123", "Small Dot Count To", "2"],
  ["123", "Extra Small Dot Count From", "1"],
  ["123", "Extra Small Dot Count To", "1"],
  ["123", "Judge this period", "4000"],
  ["ab", "---- FNC_DB input ----", "----"],
  ["123", "Signal column number", "121"],
  ["bool", "Hide signal column", "false"],
];

function TypeIcon({ kind }: { kind: string }) {
  const tone = kind === "ab" ? "border-[#b89a20] bg-[#eedb6c]" : kind === "123" ? "border-[#4a86c0] bg-[#7db8ee]" : "border-[#2f9e4a] bg-[#5fdc7c]";
  return (
    <span className={`flex h-[15px] w-[15px] items-center justify-center rounded-[2px] border font-['Liberation_Sans'] text-[8px] leading-none font-bold text-[#1c2f45] ${tone}`}>
      {kind === "bool" ? "⁄-" : kind}
    </span>
  );
}

function InputsDialog() {
  const tab = "h-[18px] border border-b-0 border-[#d9d9d9] px-[5px] leading-none";
  return (
    <div role="dialog" aria-label="Custom Indicator - FNC_2ndDot" className="absolute top-[635px] left-[2420px] flex h-[571px] w-[604px] flex-col border border-[#555] bg-[#f0f0f0] font-['Liberation_Sans'] text-[11px] text-black shadow-[0_4px_18px_5px_rgba(0,0,0,0.4)]">
      <header className="flex h-[31px] shrink-0 items-center bg-white pl-2 font-['Open_Sans'] text-[12px]">
        <h2 className="flex-1">Custom Indicator - FNC_2ndDot</h2>
        <button className="w-11 text-[14px]">?</button>
        <button aria-label="Close" className="w-[46px] text-[22px] leading-none">×</button>
      </header>
      <div className="mt-[6px] flex items-end pl-[8px]">
        <button className={`${tab} w-[41px]`}>About</button>
        <button className={`${tab} w-[52px]`}>Common</button>
        <button className="h-[21px] w-[45px] border border-b-0 border-[#d9d9d9] bg-white p-0 leading-none">Inputs</button>
        <button className={`${tab} w-[40px] px-0`}>Colors</button>
        <button className={`${tab} w-[69px] px-0`}>Visualization</button>
      </div>
      <div className="mx-[6px] flex flex-1 gap-[9px] border border-[#dcdcdc] bg-white py-[8px] pr-[8px] pl-[11px]">
        <div className="flex-1 border border-[#828790]">
          <table className="w-full table-fixed border-collapse">
            <thead>
              <tr className="h-[24px] text-left">
                <th className="w-[227px] border-r border-[#e0e0e0] pl-[7px] font-normal">Variable</th>
                <th className="pl-[7px] font-normal">Value</th>
              </tr>
            </thead>
            <tbody>
              {inputs.map(([kind, name, value], i) => (
                <tr key={name} className={`h-[20px] border-b border-[#c4c4c4] leading-[19px] ${i % 2 ? "bg-[#ebebeb]" : "bg-white"}`}>
                  <td className="border-r border-[#c4c4c4] p-0 pl-[2px]"><span className="flex items-center gap-[5px] whitespace-nowrap"><TypeIcon kind={kind} />{name}</span></td>
                  <td className="p-0 pl-[3px] whitespace-nowrap">{value}</td>
                </tr>
              ))}
            </tbody>
          </table>
        </div>
        <div className="flex w-[103px] flex-col justify-end gap-[11px]">
          <button className={winBtn}>Load</button>
          <button className={winBtn}>Save</button>
        </div>
      </div>
      <div className="flex justify-end gap-[9px] px-[8px] pt-[6px] pb-[9px]">
        <button className="h-[22px] w-[73px] border-2 border-[#0078d7] bg-[#e1e1e1] text-[12px] leading-none">OK</button>
        <button className={`${winBtn} w-[73px]`}>Cancel</button>
        <button className={`${winBtn} w-[73px]`}>Reset</button>
      </div>
    </div>
  );
}

function Annotations() {
  return (
    <svg className="pointer-events-none absolute top-0 left-0 h-full w-full">
      <defs>
        <clipPath id="lens"><ellipse cx="587" cy="235" rx="96" ry="101" /></clipPath>
        <filter id="soft" x="-20%" y="-20%" width="140%" height="140%">
          <feDropShadow dx="2" dy="4" stdDeviation="3" floodOpacity="0.55" />
        </filter>
      </defs>
      <g fill="none" stroke="#ffff00" strokeWidth="4" filter="url(#soft)">
        <rect x="192" y="87" width="48" height="633" />
        <rect x="12" y="537" width="373" height="31" />
        <rect x="2437" y="746" width="533" height="81" />
      </g>
      <g filter="url(#soft)">
        <path d="M253,131 L500,190 L486,220 Z" fill="#fff" />
        <ellipse cx="587" cy="235" rx="103" ry="108" fill="#fff" />
      </g>
      <ellipse cx="587" cy="235" rx="100" ry="105" fill="none" stroke="#a8a8a8" />
      <ellipse cx="587" cy="235" rx="96" ry="101" fill="#000" />
      <g clipPath="url(#lens)">
        <rect x="485" y="180" width="206" height="98" fill="#222" />
        <path d="M480,170 H607 V130 M615,130 V170 H700 M480,180 H700 M480,278 H700 M622,180 V340" fill="none" stroke="#555" strokeWidth="2" />
        <g fill="#008a00" className="font-['Liberation_Mono'] text-[26px]">
          <text x="518" y="162">pen</text>
          <text x="491" y="212">ot</text>
          <text x="545" y="212">2Dot</text>
          <text x="491" y="241">0</text>
          <text x="562" y="241">50</text>
          <text x="494" y="271">1</text>
          <text x="562" y="271">M1</text>
          <text x="651" y="223">Lo</text>
        </g>
        <rect x="573" y="300" width="10" height="2" fill="#eee" />
      </g>
    </svg>
  );
}

function Terminal() {
  const heads: [string, string][] = [["Time", "w-[468px]"], ["Type", "w-[235px]"], ["Size", "w-[183px]"], ["Symbol", "w-[233px]"], ["Price", "w-[262px]"], ["S / L", "w-[259px]"], ["T / P", "w-[261px]"], ["Profit", ""]];
  return (
    <footer className="flex flex-1 flex-col border-t-2 border-black bg-[#f0f0f0] font-['Open_Sans'] text-[12px] text-black">
      <nav className="flex h-[24px] items-start">
        <button className="h-[19px] w-[100px] text-[12px] leading-none text-[#8a8a8a]">GOOGLE.US,M1</button>
        <button className="h-[19px] w-[88px] border border-t-0 border-black bg-white text-[12px] leading-none">USDCAD,M5</button>
        <span className="ml-auto flex gap-3 pr-3 text-[#777]"><button aria-label="Scroll left">‹</button><button aria-label="Scroll right">›</button></span>
      </nav>
      <div className="ml-[5px] flex-1 border-t border-l border-[#8c8c8c] bg-white">
        <table className="w-full table-fixed border-collapse text-[11px]">
          <thead>
            <tr className="h-[24px]">
              <th className="w-[339px] border-r border-[#e4e4e4] pl-[6px] text-left font-normal">Order &nbsp;<span className="text-[#999]">⁄</span></th>
              {heads.map(([t, w]) => (
                <th key={t} className={`${w} border-r border-[#e4e4e4] pr-[5px] text-right font-normal`}>{t}</th>
              ))}
            </tr>
          </thead>
          <tbody>
            <tr className="h-[20px] bg-[#c8c8c8] font-bold">
              <td colSpan={8} className="pl-[6px]">
                <span className="mr-[6px] inline-block h-[9px] w-[9px] rounded-full border border-[#777] align-[-1px]" />
                Balance: 0.00 USD &nbsp;Equity: 0.00 &nbsp;Free margin: 0.00
              </td>
              <td className="pr-[5px] text-right">0.00</td>
            </tr>
          </tbody>
        </table>
      </div>
      <div className="ml-[56px] h-px bg-black" />
    </footer>
  );
}

export default function App() {
  return (
    <main className="relative flex min-h-screen flex-col overflow-hidden bg-[#ababab]">
      <div className="flex items-start">
        <Dashboard />
        <ChartWindow />
      </div>
      <Terminal />
      <IndicatorsDialog />
      <InputsDialog />
      <Annotations />
    </main>
  );
}
